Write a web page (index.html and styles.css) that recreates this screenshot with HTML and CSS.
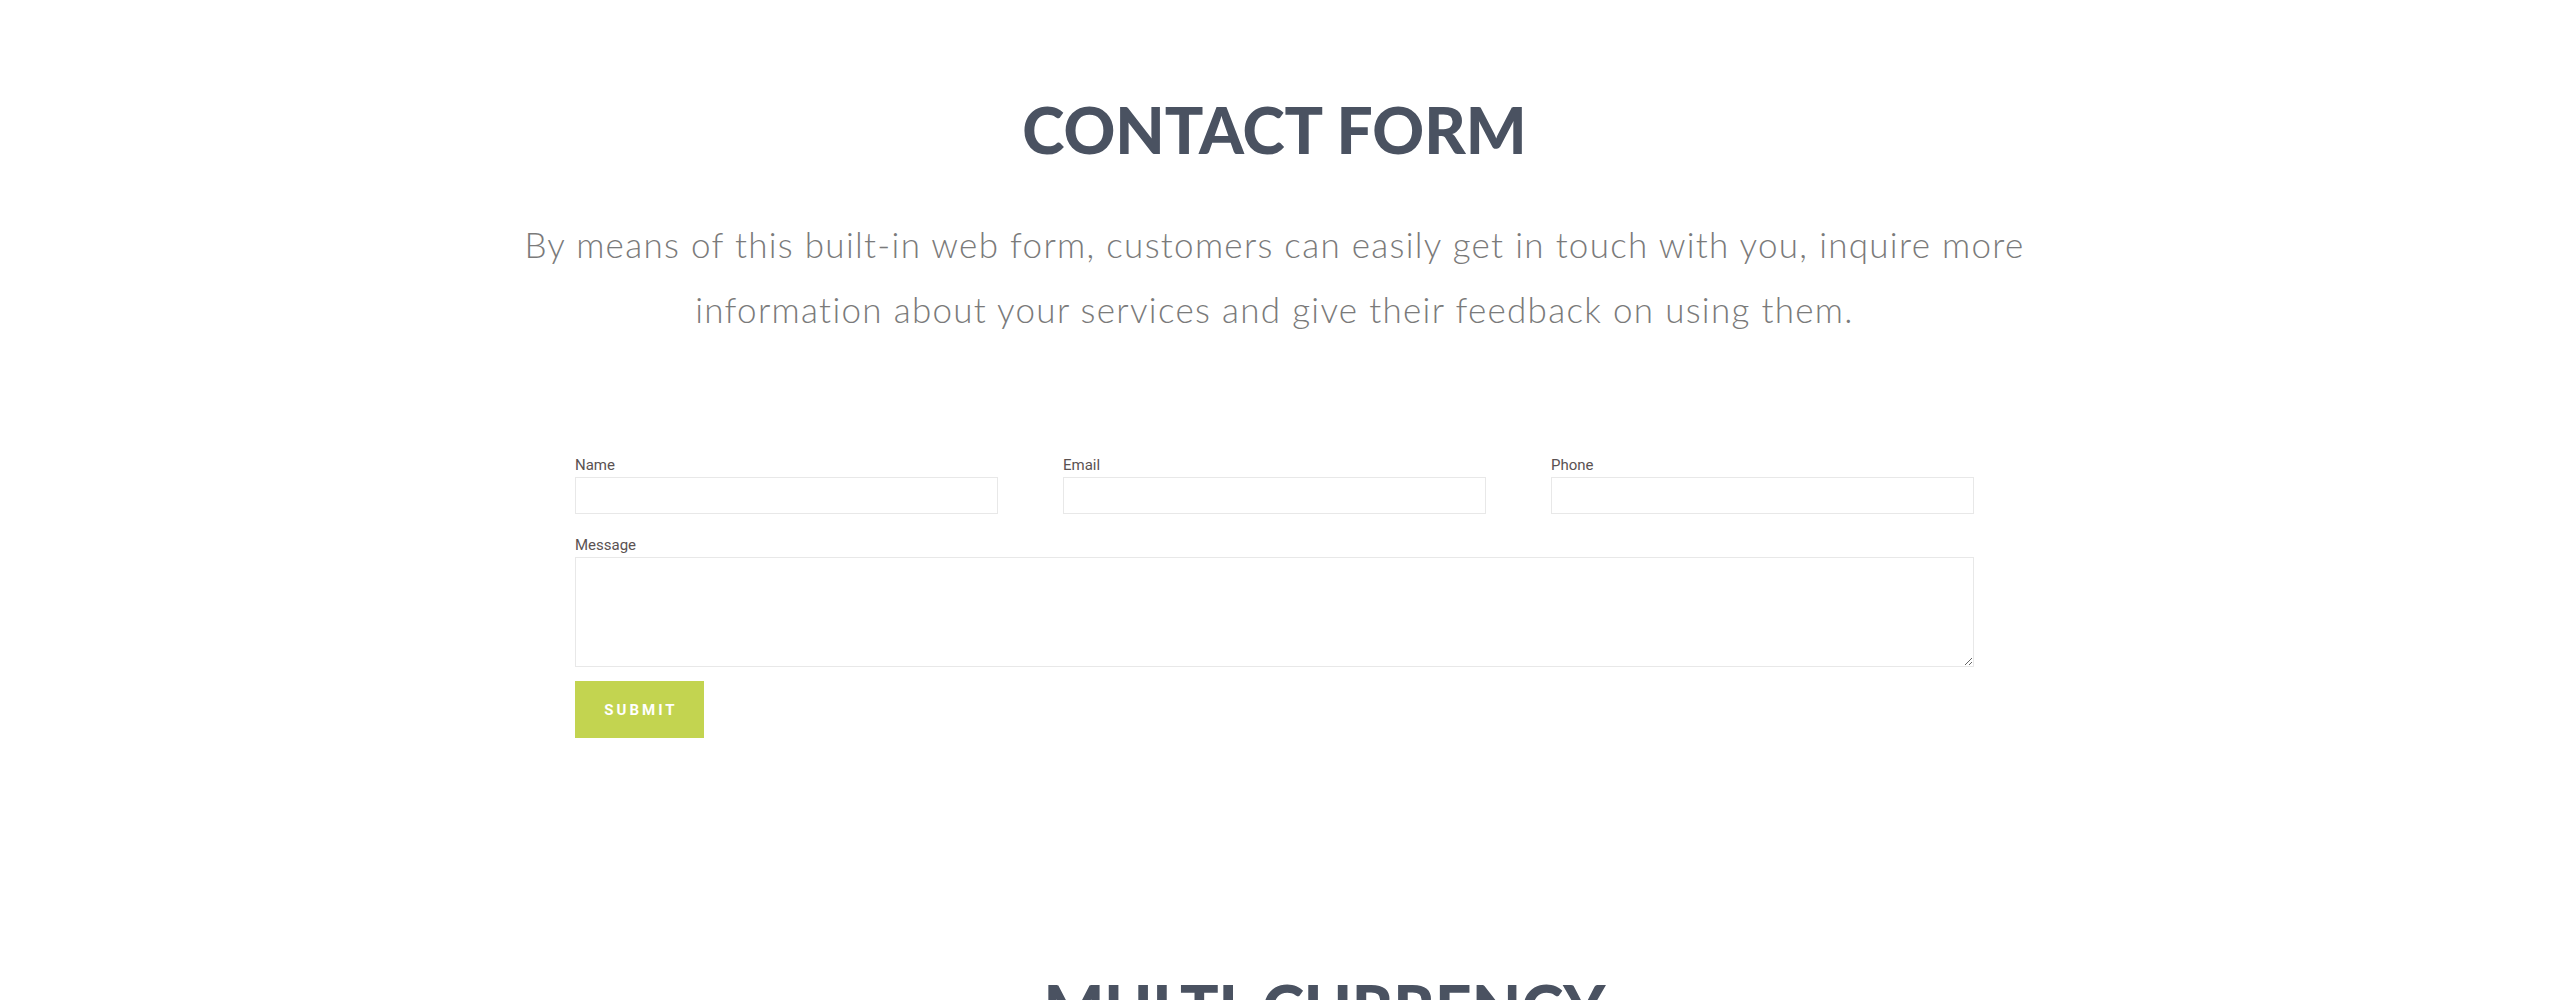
FILE: index.html
```html
<!DOCTYPE html>
<html lang="en">
<head>
<meta charset="utf-8">
<title>Contact Form</title>
<link rel="stylesheet" href="styles.css">
</head>
<body>
<main class="page">
  <section class="contact">
    <h2 class="section-title">CONTACT FORM</h2>
    <p class="lead">By means of this built-in web form, customers can easily get in touch with you, inquire more<br>information about your services and give their feedback on using them.</p>
    <form class="form">
      <div class="field">
        <label class="field-label" for="name">Name</label>
        <input class="field-input" id="name" type="text">
      </div>
      <div class="field">
        <label class="field-label" for="email">Email</label>
        <input class="field-input" id="email" type="email">
      </div>
      <div class="field">
        <label class="field-label" for="phone">Phone</label>
        <input class="field-input" id="phone" type="tel">
      </div>
      <div class="field field-wide">
        <label class="field-label" for="message">Message</label>
        <textarea class="field-textarea" id="message"></textarea>
      </div>
      <div class="actions">
        <button class="submit" type="button">SUBMIT</button>
      </div>
    </form>
  </section>
  <section class="currency">
    <h2 class="section-title">MULTI-CURRENCY</h2>
  </section>
</main>
</body>
</html>
```

FILE: styles.css
```css
html, body {
  margin: 0;
  padding: 0;
  background: #ffffff;
}

body {
  font-family: "Lato", "Liberation Sans", sans-serif;
  overflow: hidden;
  height: 1000px;
}

.page {
  padding-right: 11px;
}

.contact {
  padding-top: 91px;
  display: flex;
  flex-direction: column;
  align-items: center;
}

.section-title {
  margin: 0;
  font-family: "Lato", "Liberation Sans", sans-serif;
  font-weight: 900;
  font-size: 64px;
  line-height: 77px;
  letter-spacing: 0;
  color: #4a5261;
  text-align: center;
}

.lead {
  margin: 44px 0 0;
  font-family: "Lato", "Liberation Sans", sans-serif;
  font-weight: 300;
  font-size: 35px;
  line-height: 65px;
  letter-spacing: 1.3px;
  color: #7a7a7a;
  text-align: center;
}

.form {
  margin-top: 113px;
  width: 1399px;
  display: grid;
  grid-template-columns: repeat(3, 1fr);
  column-gap: 65px;
  row-gap: 21px;
}

.field {
  display: flex;
  flex-direction: column;
}

.field-wide {
  grid-column: 1 / -1;
}

.field-label {
  font-family: "Roboto", "Liberation Sans", sans-serif;
  font-size: 15px;
  line-height: 20px;
  color: #5a5252;
  margin-bottom: 2px;
}

.field-input,
.field-textarea {
  box-sizing: border-box;
  margin: 0;
  border: 1px solid #e8e8e8;
  background: #ffffff;
  font-family: "Roboto", "Liberation Sans", sans-serif;
  font-size: 14px;
  outline: none;
}

.field-input {
  height: 37px;
  padding: 0 10px;
}

.field-textarea {
  height: 110px;
  padding: 8px 10px;
  resize: vertical;
}

.actions {
  grid-column: 1 / -1;
  margin-top: -7px;
  display: flex;
}

.submit {
  width: 129px;
  height: 57px;
  border: 0;
  background: #c3d450;
  color: #ffffff;
  font-family: "Roboto", "Liberation Sans", sans-serif;
  font-weight: 700;
  font-size: 15px;
  letter-spacing: 3px;
  padding: 0 0 0 3px;
}

.currency {
  padding-top: 231px;
  padding-left: 100px;
  display: flex;
  justify-content: center;
}
```
